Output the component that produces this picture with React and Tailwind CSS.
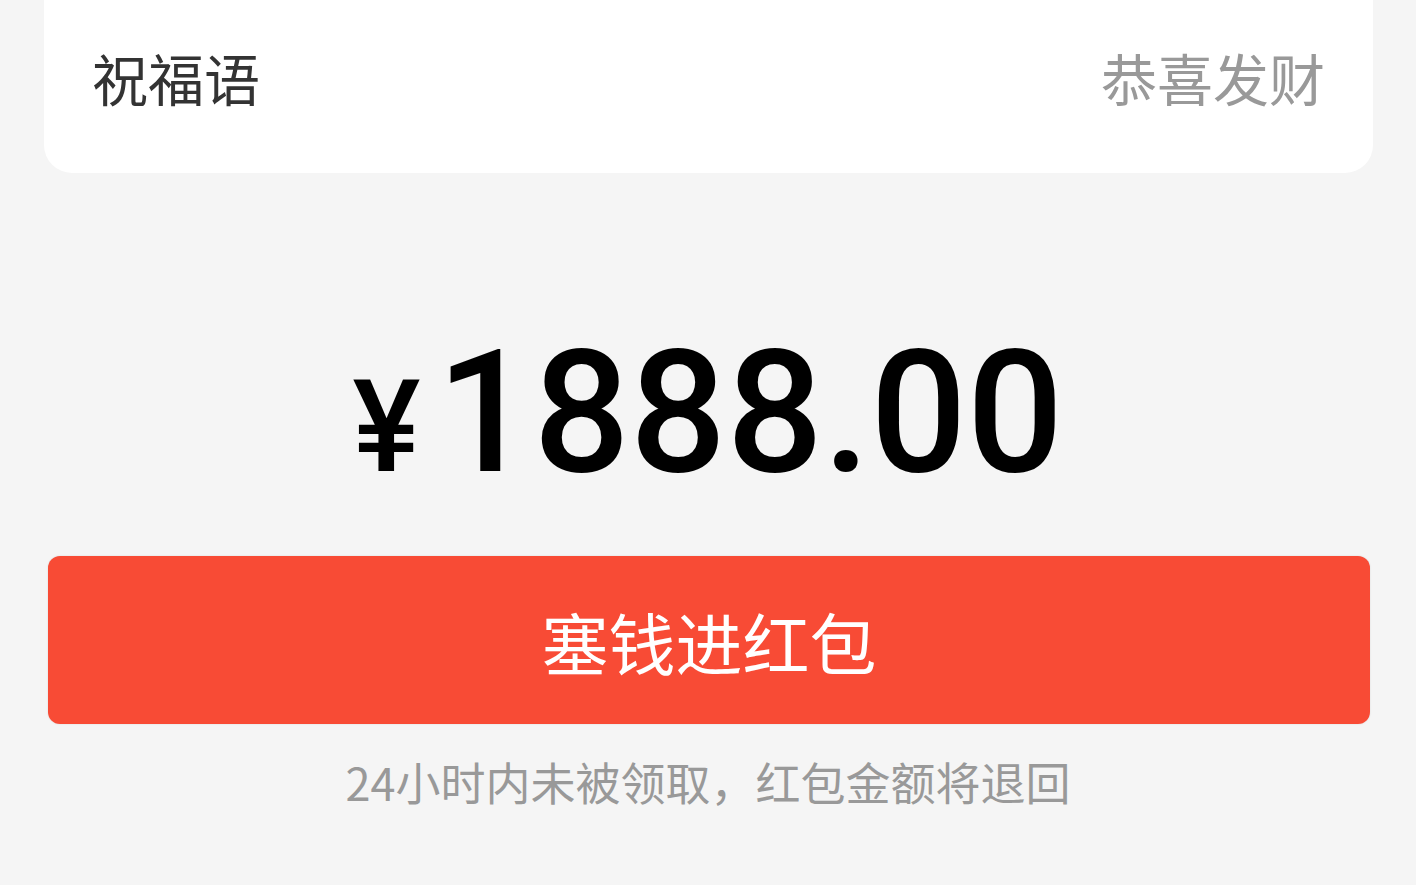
export default function App() {
  const cjk = { fontFamily: '"Noto Sans CJK SC", "Noto Sans", sans-serif' };

  return (
    <div className="min-h-screen w-full bg-[#f5f5f5]" style={cjk}>
      {/* greeting row */}
      <div className="mx-[44px] mr-[43px] flex h-[173px] items-center justify-between rounded-b-[28px] bg-white px-[48px] pb-[19px]">
        <span className="text-[56px] leading-none text-[#333333]">祝福语</span>
        <span className="text-[56px] leading-none text-[#999999]">恭喜发财</span>
      </div>

      {/* amount */}
      <div className="flex h-[383px] items-end justify-center pb-[58px]">
        <div className="flex items-baseline leading-none text-black" style={{ fontFamily: 'Roboto, "Liberation Sans", sans-serif' }}>
          <span className="mr-[16px] text-[128px] font-medium leading-none">¥</span>
          <span className="text-[170px] font-medium leading-none tracking-[0px]">1888.00</span>
        </div>
      </div>

      {/* submit */}
      <div className="ml-[48px] mr-[46px]">
        <button className="flex h-[168px] w-full items-center justify-center rounded-[12px] bg-[#f84b35] text-[67px] leading-none text-white shadow-[0_0_2px_rgba(0,0,0,0.12)]">
          塞钱进红包
        </button>
      </div>

      <p className="mt-[35px] text-center text-[45px] leading-none text-[#999999]">
        24小时内未被领取，红包金额将退回
      </p>
    </div>
  );
}
